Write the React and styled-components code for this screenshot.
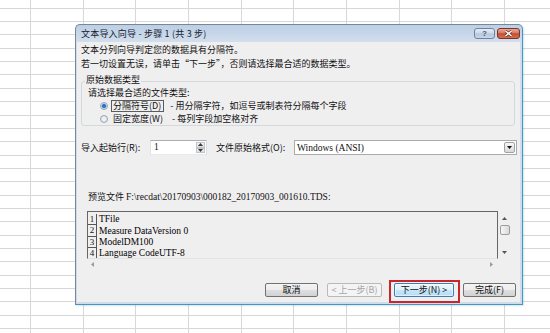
import React from "react";
import styled, { createGlobalStyle, css } from "styled-components";

const GlobalStyle = createGlobalStyle`
  html, body { margin: 0; padding: 0; background: #fff; }
  body { font-family: "Noto Sans CJK SC", "Noto Sans", sans-serif; color: #111; }
  * { box-sizing: border-box; }
`;

const Sheet = styled.div`
  position: relative;
  width: 550px;
  height: 333px;
  overflow: hidden;
  background-color: #fff;
  background-image:
    repeating-linear-gradient(90deg, #d6d7d8 0 1px, transparent 1px 52.67px),
    repeating-linear-gradient(180deg, #d6d7d8 0 1px, transparent 1px 13.35px);
  background-size: 580px 100%, 100% 348px;
  background-position: -22.67px 0, 0 -5.65px;
  background-repeat: no-repeat;
`;

const Window = styled.div`
  position: absolute;
  left: 75px;
  top: 24px;
  width: 448px;
  height: 281px;
  display: flex;
  flex-direction: column;
  padding: 0 2px 2px 1px;
  border: 1px solid;
  border-color: #76879a #3b98cb #3b98cb #76879a;
  border-radius: 5px 5px 0 0;
  background: linear-gradient(180deg, #bccfe5 0px, #d2deed 17px, #cfdcec 100%);
  box-shadow: 1px 1px 2px rgba(0, 0, 0, 0.12);
`;

const TitleBar = styled.div`
  height: 17px;
  flex: none;
  display: flex;
  align-items: center;
  justify-content: space-between;
  padding-left: 4px;
`;

const Title = styled.span`
  font-size: 9px;
  line-height: 17px;
  color: #16222e;
  white-space: nowrap;
  letter-spacing: 0.2px;
`;

const Controls = styled.div`
  display: flex;
  gap: 2px;
  align-self: flex-start;
  margin-top: 3px;
`;

const CaptionButton = styled.span`
  width: ${(p) => p.$w}px;
  height: 11px;
  display: flex;
  align-items: center;
  justify-content: center;
  border: 1px solid ${(p) => (p.$close ? "#7d3226" : "#70839a")};
  border-radius: 3px;
  background: ${(p) =>
    p.$close
      ? "linear-gradient(180deg, #e9a898 0%, #d97862 45%, #c44c35 52%, #d2704f 100%)"
      : "linear-gradient(180deg, #e4ecf5 0%, #cbd8e7 48%, #b5c7dd 52%, #c7d6e8 100%)"};
  font-family: "Liberation Sans", sans-serif;
  font-weight: bold;
  font-size: 8px;
  line-height: 9px;
  color: #4a5b70;
`;

const Body = styled.div`
  flex: 1;
  background: #f0eff0;
  display: flex;
  flex-direction: column;
  padding: 1px 3px 0 4px;
  font-size: 9px;
`;

const Para = styled.div`
  line-height: 14px;
  white-space: nowrap;
`;

const Group = styled.fieldset`
  margin: 4px 2px 0 0;
  padding: 0 0 0 6px;
  border: 1px solid #d3d8dd;
  border-radius: 3px;
  min-width: 0;
`;

const Legend = styled.legend`
  font-size: 9px;
  line-height: 9px;
  padding: 0 1px 3px;
  margin-left: -3px;
`;

const Prompt = styled.div`
  line-height: 12px;
  white-space: nowrap;
`;

const RadioRow = styled.div`
  height: 13px;
  display: flex;
  align-items: center;
  padding-left: 12px;
  white-space: nowrap;
`;

const RadioDot = styled.span`
  width: 8px;
  height: 8px;
  flex: none;
  border-radius: 50%;
  border: 1px solid #97a4b2;
  margin-right: 3px;
  background: ${(p) =>
    p.$checked
      ? "radial-gradient(circle, #2f74c0 0 1.6px, #8fb9e3 2.2px, #e6eef7 3px)"
      : "radial-gradient(circle, #f3f4f6 0, #dfe3e8 100%)"};
`;

const OptionLabel = styled.span`
  padding: 0 2px 0 1px;
  line-height: 10px;
  border: 1px solid ${(p) => (p.$focused ? "#5c5c5c" : "transparent")};
`;

const OptionDesc = styled.span`
  margin-left: 6px;
`;

const FieldRow = styled.div`
  display: flex;
  align-items: center;
  height: 15px;
  margin-top: 14px;
`;

const FieldLabel = styled.span`
  width: ${(p) => p.$w}px;
  margin-left: ${(p) => p.$ml || 0}px;
  flex: none;
  white-space: nowrap;
`;

const SpinBox = styled.div`
  width: 57px;
  height: 15px;
  flex: none;
  display: flex;
  background: #fff;
  border: 1px solid;
  border-color: #abadb3 #dbdfe6 #e3e9ef #e2e3ea;
`;

const Mono = styled.span`
  font-family: "Liberation Serif", serif;
  font-size: 9.5px;
  white-space: pre;
`;

const SpinValue = styled(Mono)`
  flex: 1;
  padding-left: 3px;
  line-height: 13px;
`;

const SpinButtons = styled.div`
  width: 9px;
  display: flex;
  flex-direction: column;
  margin: 1px 1px 1px 0;
`;

const SpinButton = styled.span`
  flex: 1;
  display: flex;
  align-items: center;
  justify-content: center;
  background: linear-gradient(180deg, #f4f4f4, #dedede);
  border: 1px solid #c2c4c7;
`;

const Select = styled.div`
  flex: 1;
  height: 15px;
  display: flex;
  align-items: center;
  background: #fff;
  border: 1px solid #a9abae;
  padding-left: 2px;
`;

const DropButton = styled.span`
  margin-left: auto;
  margin-right: 1px;
  width: 11px;
  height: 11px;
  display: flex;
  align-items: center;
  justify-content: center;
  border: 1px solid #9ea3a8;
  border-radius: 2px;
  background: linear-gradient(180deg, #f7f7f7, #d8d8d8);
`;

const PreviewLabel = styled.div`
  margin-top: 36px;
  padding-left: 7px;
  line-height: 12px;
  white-space: nowrap;
`;

const Preview = styled.div`
  margin: 8px 6px 0 6px;
  display: grid;
  grid-template-columns: 1fr 13px;
  grid-template-rows: 48px 10px;
`;

const PreviewGrid = styled.div`
  border: 1px solid #666;
  border-bottom-color: #e3e3e3;
  padding-top: 2px;
  overflow: hidden;
`;

const PreviewLine = styled.div`
  height: 11.4px;
  display: flex;
  align-items: center;
`;

const LineNo = styled(Mono)`
  width: 9px;
  height: 11.4px;
  flex: none;
  text-align: center;
  line-height: 11px;
  font-size: 9px;
  border-right: 1px solid #555;
  border-bottom: 1px solid #555;
`;

const LineText = styled(Mono)`
  padding-left: 2px;
  line-height: 11px;
  color: #000;
`;

const VScroll = styled.div`
  display: flex;
  flex-direction: column;
  align-items: center;
  padding: 5px 0 4px;
`;

const Thumb = styled.span`
  width: 10px;
  height: 10px;
  margin-top: 4px;
  border: 1px solid #9c9c9c;
  border-radius: 2px;
  background: linear-gradient(90deg, #f6f6f6, #dadada);
`;

const Spacer = styled.span`
  flex: 1;
`;

const HScroll = styled.div`
  display: flex;
  align-items: center;
  justify-content: space-between;
  padding: 0 4px 0 3px;
`;

const ButtonRow = styled.div`
  display: flex;
  justify-content: flex-end;
  gap: 9px;
  margin-top: 14px;
  padding-right: 1px;
`;

const Highlight = styled.span`
  position: relative;
  display: flex;
  margin-left: 3px;
  &::after {
    content: "";
    position: absolute;
    inset: -3px -6px -6px -5px;
    border: 2px solid #c8262c;
    pointer-events: none;
  }
`;

const Button = styled.button`
  width: ${(p) => p.$w}px;
  height: 14px;
  padding: 0;
  font-family: inherit;
  font-size: 9px;
  line-height: 12px;
  color: #111;
  border: 1px solid #727272;
  border-radius: 2px;
  background: linear-gradient(180deg, #f4f4f4 0%, #ececec 50%, #dedede 51%, #d2d2d2 100%);
  white-space: nowrap;
  ${(p) =>
    p.$default &&
    css`
      border-color: #3c7fb1;
      background: linear-gradient(180deg, #eef7fd 0%, #dcf0fc 50%, #c6e6fa 51%, #b3dcf5 100%);
      box-shadow: inset 0 0 0 1px rgba(255, 255, 255, 0.55);
    `}
  &:disabled {
    color: #a5a5a5;
    border-color: #b9b9b9;
    background: #f4f4f4;
  }
`;

const Arrow = ({ dir, color = "#555" }) => {
  const pts = {
    up: "0,4 2.5,1 5,4",
    down: "0,1 2.5,4 5,1",
    left: "4,0 1,2.5 4,5",
    right: "1,0 4,2.5 1,5",
  }[dir];
  return (
    <svg width="5" height="5" viewBox="0 0 5 5" style={{ display: "block" }}>
      <polygon points={pts} fill={color} />
    </svg>
  );
};

const TinyArrow = ({ dir }) => (
  <svg width="5" height="3" viewBox="0 0 5 3" style={{ display: "block" }}>
    <polygon points={dir === "up" ? "0,3 2.5,0 5,3" : "0,0 2.5,3 5,0"} fill="#3a3a3a" />
  </svg>
);

const lines = ["TFile", "Measure DataVersion 0", "ModelDM100", "Language CodeUTF-8"];

export default function App() {
  return (
    <>
      <GlobalStyle />
      <Sheet>
        <Window>
          <TitleBar>
            <Title>文本导入向导 - 步骤 1 (共 3 步)</Title>
            <Controls>
              <CaptionButton $w={21}>?</CaptionButton>
              <CaptionButton $w={23} $close>
                <svg width="9" height="7" viewBox="0 0 9 7">
                  <path d="M1.5 1 L7.5 6 M7.5 1 L1.5 6" stroke="#5a1a12" strokeWidth="2.6" />
                  <path d="M1.5 1 L7.5 6 M7.5 1 L1.5 6" stroke="#fff" strokeWidth="1.6" />
                </svg>
              </CaptionButton>
            </Controls>
          </TitleBar>
          <Body>
            <Para>文本分列向导判定您的数据具有分隔符。</Para>
            <Para>若一切设置无误，请单击“下一步”，否则请选择最合适的数据类型。</Para>
            <Group>
              <Legend>原始数据类型</Legend>
              <Prompt>请选择最合适的文件类型:</Prompt>
              <RadioRow>
                <RadioDot $checked />
                <OptionLabel $focused>分隔符号(D)</OptionLabel>
                <OptionDesc>- 用分隔字符，如逗号或制表符分隔每个字段</OptionDesc>
              </RadioRow>
              <RadioRow>
                <RadioDot />
                <OptionLabel>固定宽度(W)</OptionLabel>
                <OptionDesc>- 每列字段加空格对齐</OptionDesc>
              </RadioRow>
            </Group>
            <FieldRow>
              <FieldLabel $w={69}>导入起始行(R):</FieldLabel>
              <SpinBox>
                <SpinValue>1</SpinValue>
                <SpinButtons>
                  <SpinButton>
                    <TinyArrow dir="up" />
                  </SpinButton>
                  <SpinButton>
                    <TinyArrow dir="down" />
                  </SpinButton>
                </SpinButtons>
              </SpinBox>
              <FieldLabel $w={78} $ml={9}>
                文件原始格式(O):
              </FieldLabel>
              <Select>
                <Mono>Windows (ANSI)</Mono>
                <DropButton>
                  <svg width="5" height="3" viewBox="0 0 5 3" style={{ display: "block" }}>
                    <polygon points="0,0 2.5,3 5,0" fill="#111" />
                  </svg>
                </DropButton>
              </Select>
            </FieldRow>
            <PreviewLabel>
              预览文件 <Mono>F:\recdat\20170903\000182_20170903_001610.TDS:</Mono>
            </PreviewLabel>
            <Preview>
              <PreviewGrid>
                {lines.map((t, i) => (
                  <PreviewLine key={i}>
                    <LineNo>{i + 1}</LineNo>
                    <LineText>{t}</LineText>
                  </PreviewLine>
                ))}
              </PreviewGrid>
              <VScroll>
                <Arrow dir="up" />
                <Thumb />
                <Spacer />
                <Arrow dir="down" />
              </VScroll>
              <HScroll>
                <Arrow dir="left" color="#9a9a9a" />
                <Arrow dir="right" color="#9a9a9a" />
              </HScroll>
            </Preview>
            <ButtonRow>
              <Button $w={53}>取消</Button>
              <Button $w={55} disabled>
                &lt; 上一步(B)
              </Button>
              <Highlight>
                <Button $w={60} $default>
                  下一步(N) &gt;
                </Button>
              </Highlight>
              <Button $w={53}>完成(F)</Button>
            </ButtonRow>
          </Body>
        </Window>
      </Sheet>
    </>
  );
}
